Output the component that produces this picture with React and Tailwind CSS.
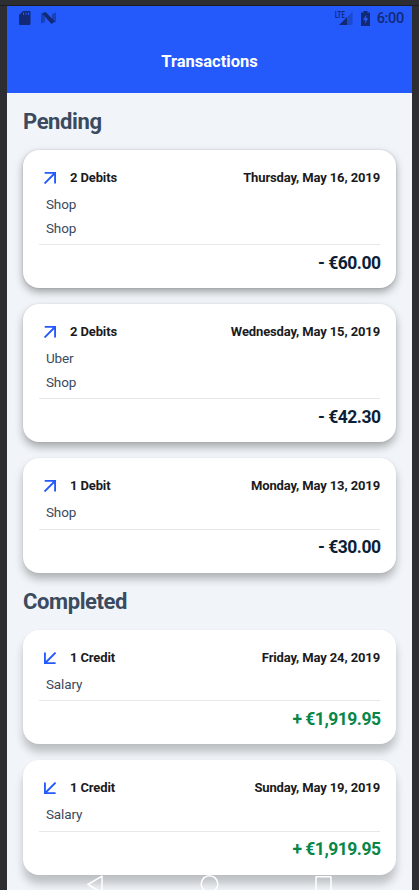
const pending = [
  { label: "2 Debits", date: "Thursday, May 16, 2019", items: ["Shop", "Shop"], amount: "- €60.00", shadow: "shadow-[0_4px_9px_rgba(0,0,0,0.34),0_0_2px_rgba(0,0,0,0.16)]" },
  { label: "2 Debits", date: "Wednesday, May 15, 2019", items: ["Uber", "Shop"], amount: "- €42.30", shadow: "shadow-[0_5px_9px_rgba(0,0,0,0.31),0_0_2px_rgba(0,0,0,0.10)]" },
  { label: "1 Debit", date: "Monday, May 13, 2019", items: ["Shop"], amount: "- €30.00", shadow: "shadow-[0_6px_9px_rgba(0,0,0,0.27),0_0_2px_rgba(0,0,0,0.07)]" },
];

const completed = [
  { label: "1 Credit", date: "Friday, May 24, 2019", items: ["Salary"], amount: "+ €1,919.95", credit: true, shadow: "shadow-[0_8px_9px_rgba(0,0,0,0.22),0_0_2px_rgba(0,0,0,0.05)]" },
  { label: "1 Credit", date: "Sunday, May 19, 2019", items: ["Salary"], amount: "+ €1,919.95", credit: true, shadow: "shadow-[0_9px_9px_rgba(0,0,0,0.21),0_0_2px_rgba(0,0,0,0.05)]" },
];

function Arrow({ credit }) {
  return (
    <svg className="ml-[5px] h-3 w-3 shrink-0" viewBox="0 0 12 12" fill="none" stroke="#2459fb" strokeWidth="1.9">
      <path d={credit ? "M11.6 0.6L1.2 11M0.9 0.6V11.1H11.6" : "M0.5 11.5L11 1M0.7 0.9H11.1V11.4"} />
    </svg>
  );
}

function Card({ label, date, items, amount, credit, shadow }) {
  return (
    <article className={`rounded-[16px] bg-white px-4 pt-4 pb-2 ${shadow}`}>
      <div className="flex h-6 items-center text-[13px] font-bold tracking-[-0.12px] text-[#1b1b1d]">
        <Arrow credit={credit} />
        <span className="ml-[14px]">{label}</span>
        <span className="ml-auto">{date}</span>
      </div>
      <ul className="mt-[2.5px] mb-1 pl-[7px] text-[13.5px] text-[#3b4a5e]">
        {items.map((item, i) => (
          <li key={i} className="flex h-[23.5px] items-center tracking-[-0.15px] first:h-6">{item}</li>
        ))}
      </ul>
      <div className="h-px bg-[#e6e8ea]" />
      <div className={`-mr-[0.5px] flex h-[35px] items-center justify-end pt-px text-[17.5px] font-bold tracking-[-0.5px] ${credit ? "text-[#078647]" : "text-[#0b1f38]"}`}>
        {amount}
      </div>
    </article>
  );
}

function Section({ title, entries }) {
  return (
    <section>
      <h2 className="flex h-[57px] items-center text-[22px] font-bold tracking-[-0.4px] text-[#3b4a5e]">{title}</h2>
      <div className="flex flex-col gap-4">
        {entries.map((entry) => <Card key={entry.date} {...entry} />)}
      </div>
    </section>
  );
}

function StatusBar() {
  return (
    <div className="flex h-6 items-center text-[#122a75]">
      <svg className="ml-3 h-[14px] w-3" viewBox="0 0 12 14">
        <path d="M4 0H10.5Q11.5 0 11.5 1V13Q11.5 14 10.5 14H1Q0 14 0 13V4Z" fill="currentColor" />
        <path d="M4.5 1.5V4M7 1.5V4M9.5 1.5V4" stroke="#2459fb" strokeWidth="1" />
      </svg>
      <svg className="ml-[10px] h-3 w-[15px]" viewBox="0 0 15 12">
        <path d="M0 1L4 2V10L0 11.5ZM11 2L15 0.5V10.5L11 9Z" fill="currentColor" opacity="0.5" />
        <path d="M1 1.2L4.5 0L14 9.5L10.5 12Z" fill="currentColor" />
      </svg>
      <svg className="ml-auto h-[14px] w-[18px] overflow-visible" viewBox="0 0 18 14">
        <path d="M17.5 1V14H4Z" fill="currentColor" opacity="0.35" />
        <path d="M12 6.3V14H4Z" fill="currentColor" />
        <text transform="translate(0 6.5) scale(0.72 1)" fontSize="8.5" fontWeight="700" fill="currentColor">LTE</text>
      </svg>
      <svg className="ml-2 h-[15px] w-[9px]" viewBox="0 0 9 15">
        <path d="M2.5 0H6.5V1.5H9V15H0V1.5H2.5Z" fill="currentColor" />
        <path d="M5.5 3.5L2 9H4.2V12.5L7.2 7.2H5Z" fill="#2459fb" />
      </svg>
      <span className="mr-2 ml-[7px] pt-[2px] text-[14.5px] leading-none font-medium tracking-[-0.3px]">6:00</span>
    </div>
  );
}

export default function App() {
  return (
    <div className="relative h-[890px] w-[419px] overflow-hidden bg-[#2d2e31] px-[7px] font-['Roboto',sans-serif]">
      <div className="-mx-[7px] h-[6px] border-b border-[#1c1d22]" />
      <div className="h-[884px] overflow-hidden bg-[#f1f5f9]">
        <header className="h-[87px] bg-[#2459fb]">
          <StatusBar />
          <h1 className="flex h-[63px] items-center justify-center pt-[2px] text-[16.5px] font-bold text-white">Transactions</h1>
        </header>
        <main className="px-4">
          <Section title="Pending" entries={pending} />
          <Section title="Completed" entries={completed} />
        </main>
      </div>
      <svg className="absolute bottom-0 left-[7px] h-4 w-[405px]" viewBox="0 0 405 16" fill="none" stroke="white" strokeWidth="1.5">
        <path d="M95 2.2L81 10.5L95 18.8Z" strokeLinejoin="round" />
        <circle cx="202.5" cy="10" r="8.3" />
        <rect x="309" y="2.8" width="15" height="15" rx="0.5" />
      </svg>
    </div>
  );
}
